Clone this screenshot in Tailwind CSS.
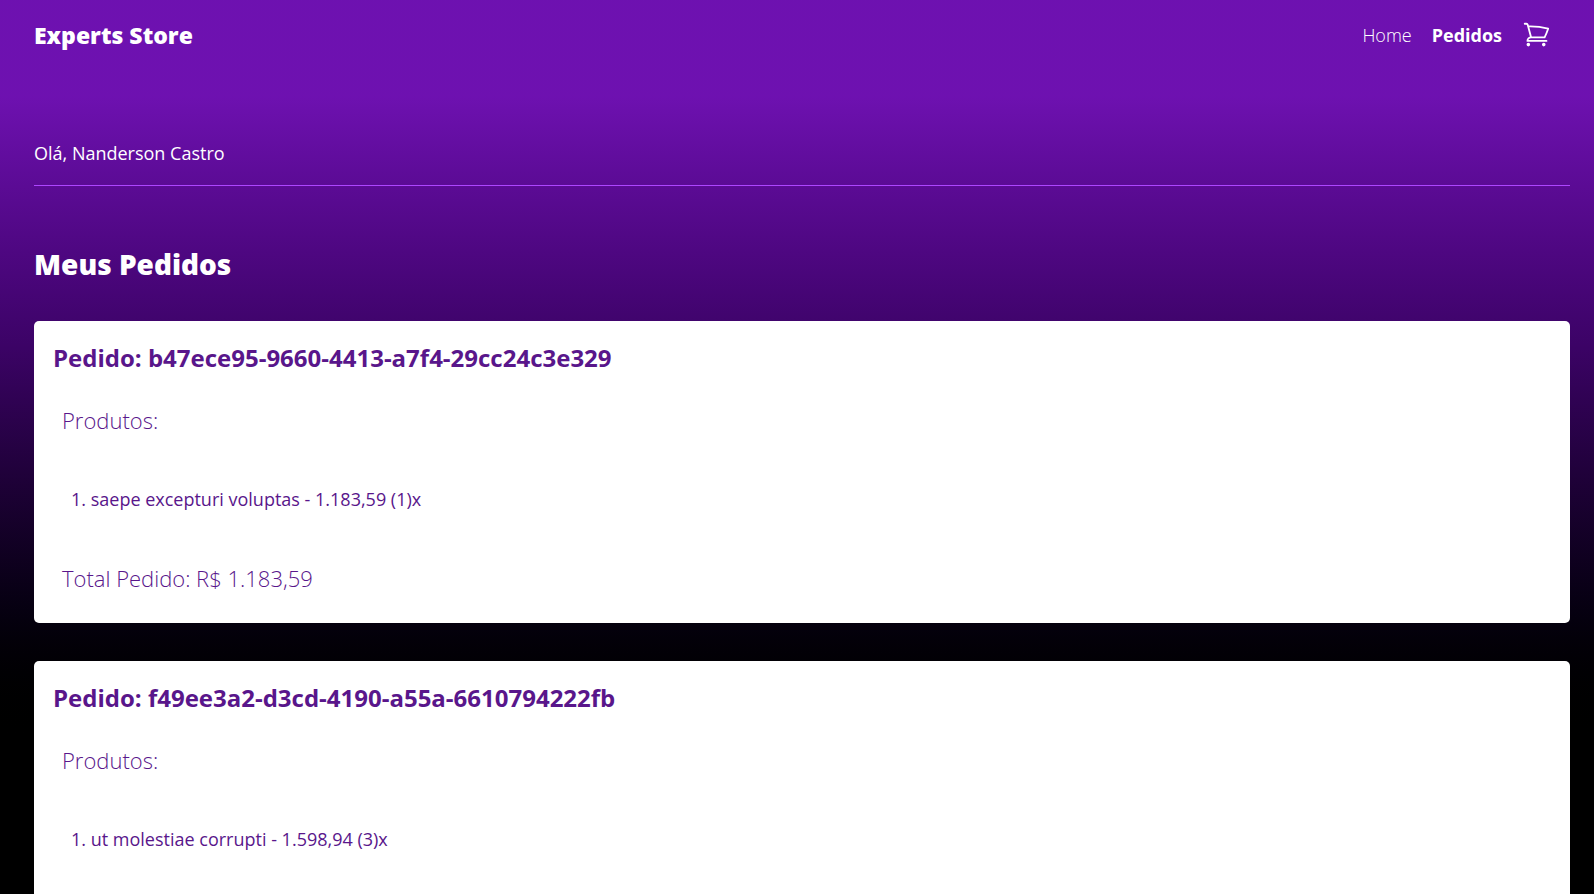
<!doctype html>
<html lang="pt-BR">
  <head>
    <meta charset="UTF-8" />
    <meta name="viewport" content="width=device-width, initial-scale=1.0" />
    <title>Meus Pedidos - Experts Store</title>
    <script src="https://cdn.jsdelivr.net/npm/@tailwindcss/browser@4"></script>
  </head>
  <body class="min-h-screen bg-black font-['Open_Sans',sans-serif] text-[18px] leading-[28px] text-white">
    <div class="bg-linear-to-b from-purple-800 from-[96px] via-purple-950 via-[345px] to-black to-[750px] pl-[34px] pr-6 pb-10">
      <!-- Menu -->
      <header class="flex items-center justify-between h-[70px]">
        <a href="#" class="text-[23px] font-extrabold">Experts Store</a>
        <nav class="flex items-center gap-5 pr-[19px]">
          <a href="#" class="font-light">Home</a>
          <a href="#" class="font-bold">Pedidos</a>
          <a href="#" aria-label="Carrinho">
            <svg class="size-[29px]" fill="none" viewBox="0 0 24 24" stroke="currentColor" stroke-width="1.5">
              <path
                stroke-linecap="round"
                stroke-linejoin="round"
                d="M2.25 2.25h1.386c.51 0 .955.343 1.087.835l.383 1.437M7.5 13.5a3 3 0 0 0-3 3h15.75m-12.75-3h11.218c1.121-2.3 2.1-4.684 2.924-7.138a60.114 60.114 0 0 0-16.536-1.84M7.5 13.5 5.106 4.522M6 19.5a.75.75 0 1 1-1.5 0 .75.75 0 0 1 1.5 0Zm12.75 0a.75.75 0 1 1-1.5 0 .75.75 0 0 1 1.5 0Z"
              ></path>
            </svg>
          </a>
        </nav>
      </header>

      <main>
        <div class="border-b border-purple-500 pt-[69px] pb-[18px]">
          <p>Olá, Nanderson Castro</p>
        </div>

        <h1 class="pt-[58px] pb-[37px] text-[28px] leading-[40px] font-extrabold">Meus Pedidos</h1>

        <!-- Lista de pedidos -->
        <div class="flex flex-col gap-[38px] text-purple-900">
          <section class="rounded-[5px] bg-white p-[19px]">
            <h2 class="text-[24px] leading-[36px] font-bold">Pedido: b47ece95-9660-4413-a7f4-29cc24c3e329</h2>
            <h3 class="px-[9px] pt-[26px] text-[22px] leading-[36px] font-light">Produtos:</h3>
            <ol class="list-inside list-decimal px-[18px] py-[47px]">
              <li>saepe excepturi voluptas - 1.183,59 (1)x</li>
            </ol>
            <p class="px-[9px] pb-2 text-[22px] leading-[36px] font-light">Total Pedido: R$ 1.183,59</p>
          </section>

          <section class="rounded-[5px] bg-white p-[19px]">
            <h2 class="text-[24px] leading-[36px] font-bold">Pedido: f49ee3a2-d3cd-4190-a55a-6610794222fb</h2>
            <h3 class="px-[9px] pt-[26px] text-[22px] leading-[36px] font-light">Produtos:</h3>
            <ol class="list-inside list-decimal px-[18px] py-[47px]">
              <li>ut molestiae corrupti - 1.598,94 (3)x</li>
            </ol>
            <p class="px-[9px] pb-2 text-[22px] leading-[36px] font-light">Total Pedido: R$ 4.796,82</p>
          </section>
        </div>
      </main>
    </div>
  </body>
</html>
